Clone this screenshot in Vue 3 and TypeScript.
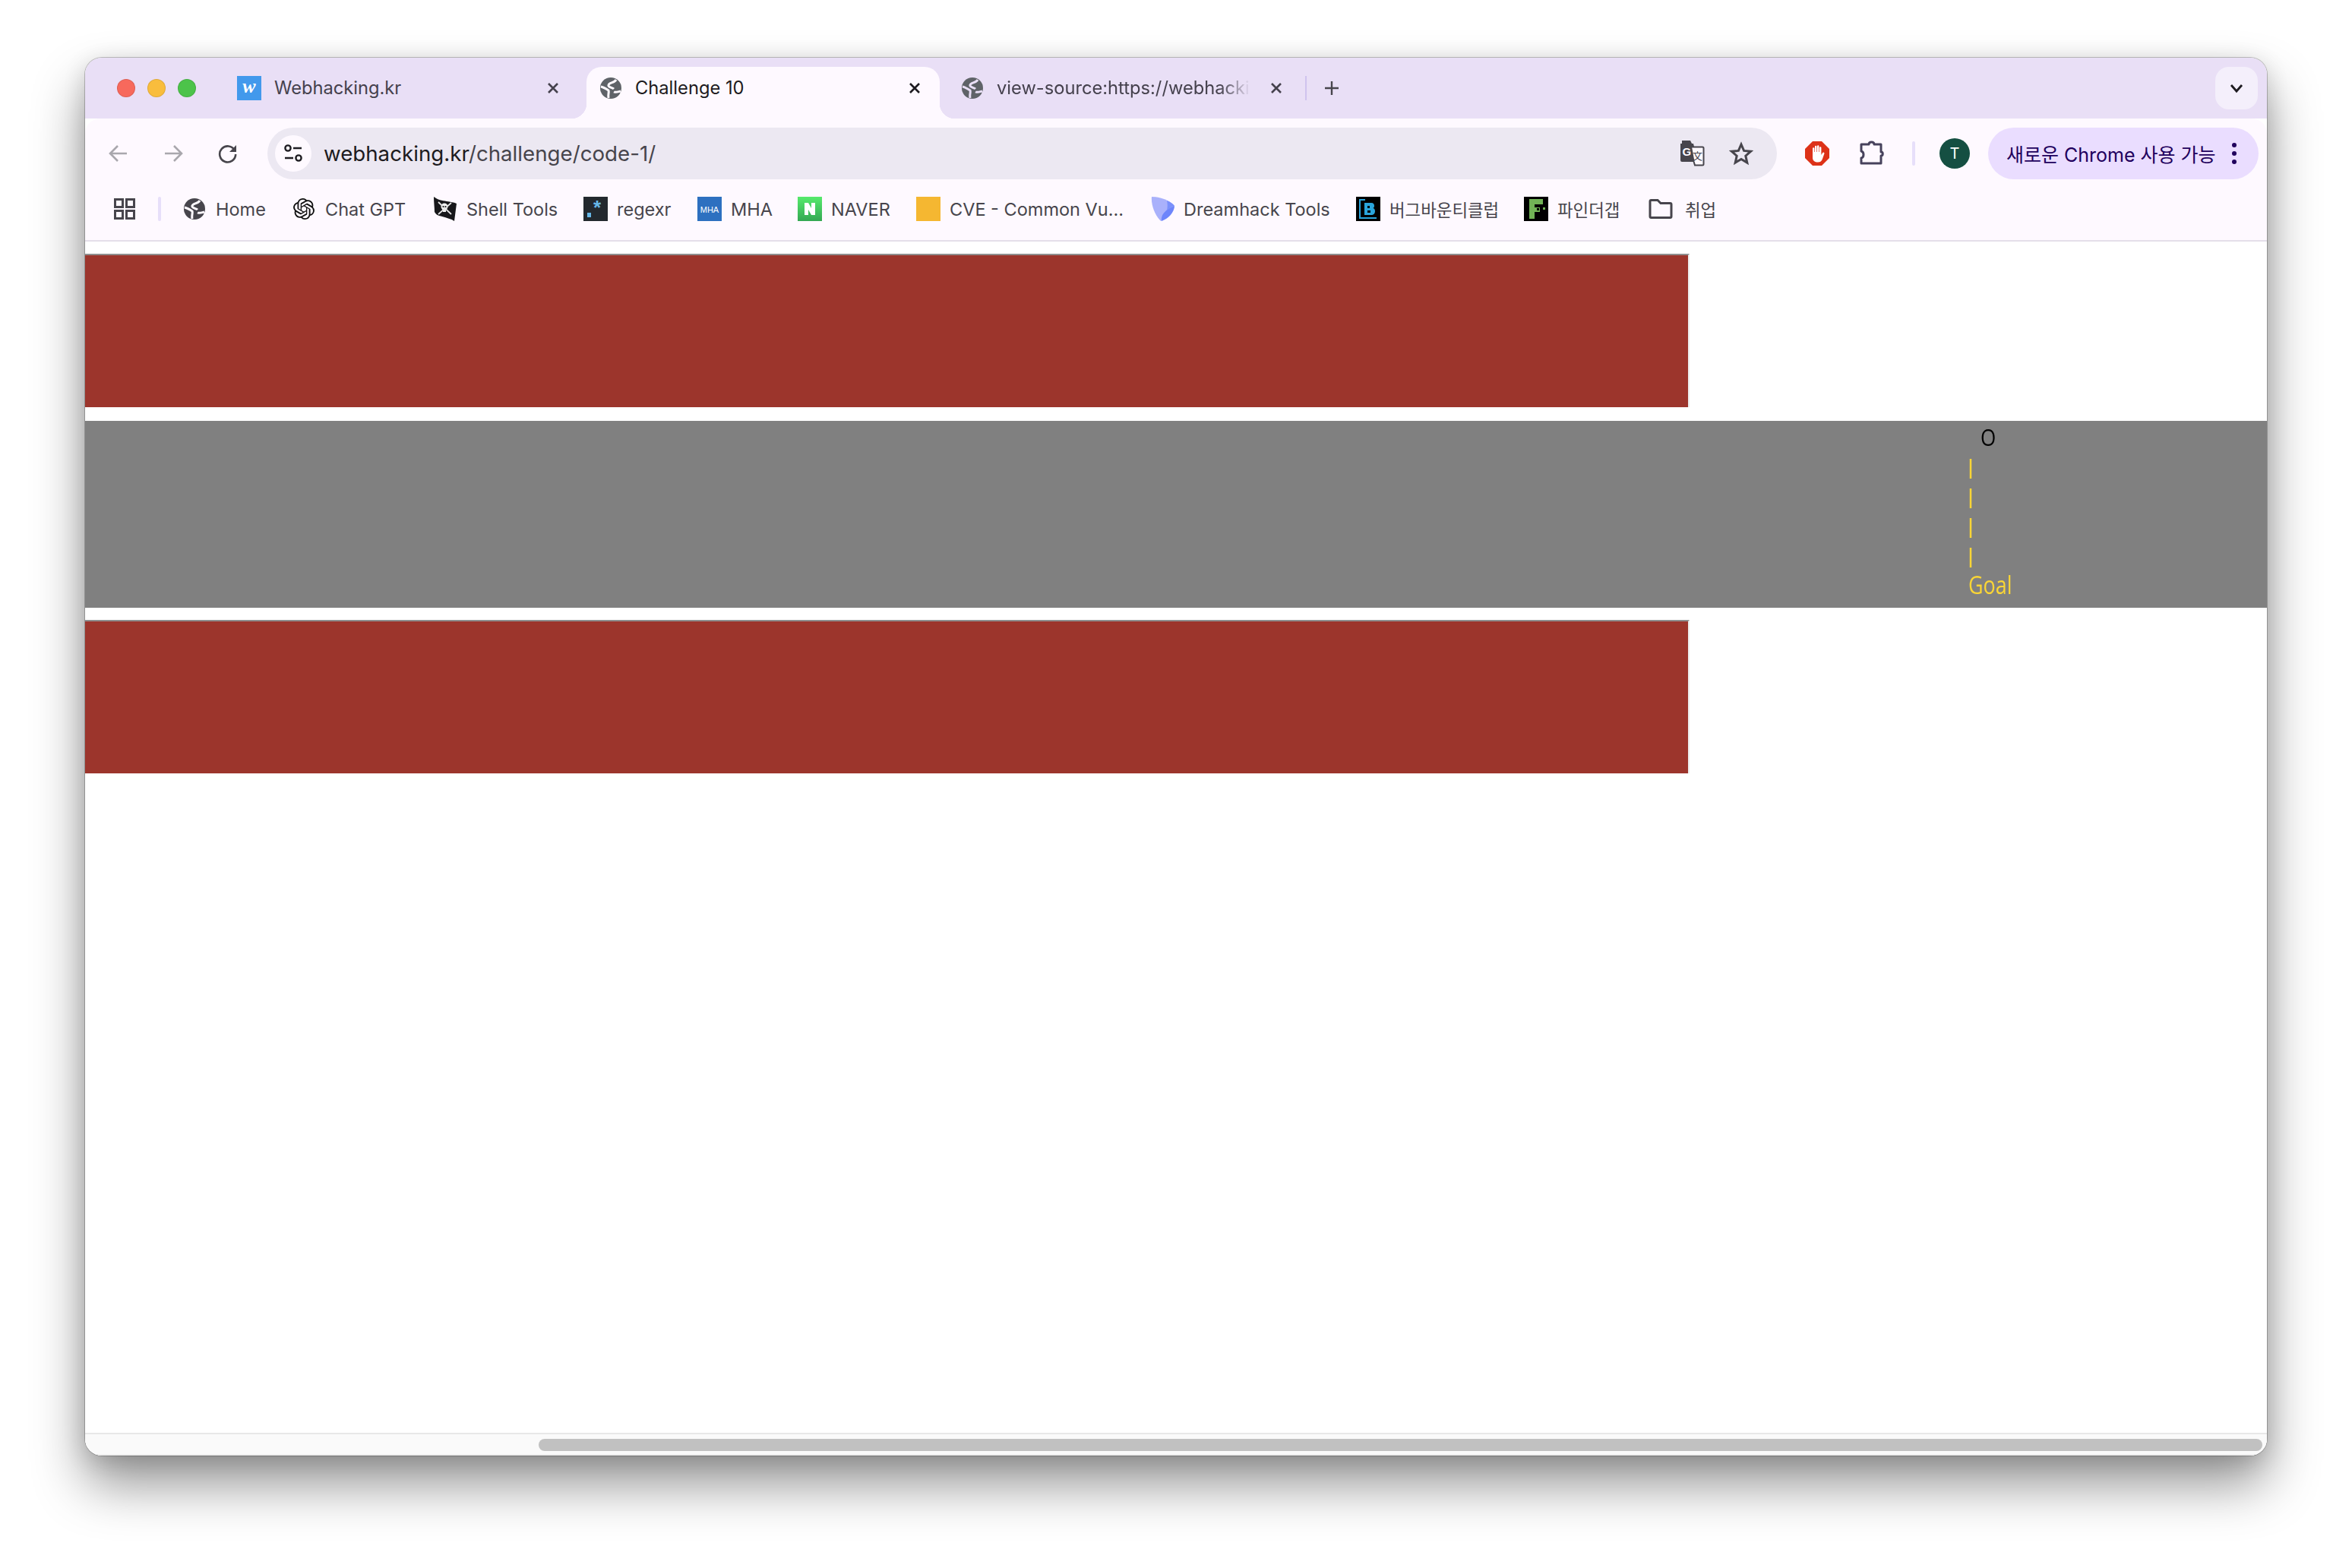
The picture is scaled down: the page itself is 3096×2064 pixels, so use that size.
<template>
  <div class="page">
    <div class="window">
      <div class="tabstrip">
        <div class="lights">
          <span class="light red" />
          <span class="light yellow" />
          <span class="light green" />
        </div>

        <div class="tab tab-first">
          <span class="fav-w">w</span>
          <span class="tab-title">Webhacking.kr</span>
          <svg class="tab-close" viewBox="0 0 24 24"><path d="M6 6l12 12M18 6L6 18" /></svg>
        </div>
        <div class="tab tab-active">
          <svg class="globe" viewBox="0 0 28 28">
            <circle cx="14" cy="14" r="14" fill="#5f6368" />
            <path d="M21 3C18 8 12 6 11 10c-1 3 5 3 7 5M1 12c4 1 7 3 10 5 1 3-1 5 0 10M18 19c2 1 5 0 9-1" fill="none" stroke="#fef9ff" stroke-width="3" />
          </svg>
          <span class="tab-title">Challenge 10</span>
          <svg class="tab-close" viewBox="0 0 24 24"><path d="M6 6l12 12M18 6L6 18" /></svg>
        </div>
        <div class="tab tab-last">
          <svg class="globe" viewBox="0 0 28 28">
            <circle cx="14" cy="14" r="14" fill="#5f6368" />
            <path d="M21 3C18 8 12 6 11 10c-1 3 5 3 7 5M1 12c4 1 7 3 10 5 1 3-1 5 0 10M18 19c2 1 5 0 9-1" fill="none" stroke="#e9dff6" stroke-width="3" />
          </svg>
          <span class="tab-title tab-fade">view-source:https://webhacki</span>
          <svg class="tab-close" viewBox="0 0 24 24"><path d="M6 6l12 12M18 6L6 18" /></svg>
        </div>

        <span class="tab-sep" />
        <svg class="new-tab" viewBox="0 0 24 24"><path d="M12 3v18M3 12h18" /></svg>
        <div class="tab-search">
          <svg viewBox="0 0 20 20" width="20" height="20"><path d="M3 6l7 8 7-8" fill="none" stroke="#1d1b20" stroke-width="2.800" /></svg>
        </div>
      </div>

      <div class="toolbar">
        <svg class="nav-btn dim" viewBox="0 0 26 26"><path d="M24 13H3M12 3L2 13l10 10" /></svg>
        <svg class="nav-btn dim" viewBox="0 0 26 26"><path d="M2 13h21M14 3l10 10-10 10" /></svg>
        <svg class="nav-btn" viewBox="0 0 26 26">
          <path d="M22 9a10.500 10.500 0 1 0 1.200 5" />
          <path class="solid" d="M24 2v9h-9z" />
        </svg>

        <div class="omnibox">
          <span class="site-chip">
            <svg viewBox="0 0 26 26" width="26" height="26" fill="none" stroke="#1f1d23" stroke-width="2.400">
              <circle cx="6" cy="6" r="3.600" />
              <path d="M13 6h11M2 19h11" />
              <circle cx="20" cy="19" r="3.600" />
            </svg>
          </span>
          <span class="url"><b>webhacking.kr</b>/challenge/code-1/</span>
          <span class="omni-icons">
            <svg class="translate" viewBox="0 0 34 34" width="34" height="34">
              <path d="M3 0h11l2 4H3zM1 4h17l6 24H3a2 2 0 0 1-2-2z" fill="#47454c" />
              <path d="M15 8.500h15a1.500 1.500 0 0 1 1.500 1.500v21a1.500 1.500 0 0 1-1.500 1.500H20l-1.500-5z" fill="#fef9ff" stroke="#47454c" stroke-width="2" />
              <text x="3.500" y="20" class="tr-g">G</text>
              <text x="17" y="25" class="tr-k">文</text>
            </svg>
            <svg class="star" viewBox="0 0 32 32" width="32" height="32"><path d="M16 4l3.600 8.400 9 .8-6.800 6 2 8.900L16 23.400l-7.800 4.700 2-8.900-6.800-6 9-.8z" /></svg>
          </span>
        </div>

        <svg class="stop" viewBox="0 0 32 32" width="32" height="32">
          <path d="M10 0h12l10 10v12L22 32H10L0 22V10z" fill="#dd3218" />
          <path d="M10 14V9.500a1.200 1.200 0 0 1 2.400 0V14h.6V7a1.200 1.200 0 0 1 2.400 0v7h.6V6.500a1.200 1.200 0 0 1 2.400 0V14h.6V8.500a1.200 1.200 0 0 1 2.400 0V18l1.800-3a1.300 1.300 0 0 1 2.200 1.300L23 23c-1 3-3 4.500-6 4.500-4 0-7-2-7-6z" fill="#fff" />
        </svg>
        <svg class="puzzle" viewBox="0 0 34 34" width="34" height="34">
          <path d="M3 5h10c0-4 7-4 7 0h9v10c3 0 3 5 0 5v10H3v-7c4-1 4-8 0-9z" />
        </svg>
        <span class="tool-sep" />
        <span class="avatar">T</span>
        <div class="update-pill">
          <span class="update-text">새로운 Chrome 사용 가능</span>
          <span class="kebab"><i /><i /><i /></span>
        </div>
      </div>

      <div class="bookmarks">
        <svg class="apps" viewBox="0 0 28 28" width="28" height="28">
          <path d="M1.500 1.500h10v10h-10zM16.500 1.500h10v10h-10zM1.500 16.500h10v10h-10zM16.500 16.500h10v10h-10z" />
        </svg>
        <span class="bm-sep" />
        <div v-for="b in bookmarks" :key="b.label" class="bm" :style="{ width: b.width + 'px' }">
          <svg v-if="b.icon === 'globe'" class="bm-icon small" viewBox="0 0 28 28">
            <circle cx="14" cy="14" r="14" fill="#47454c" />
            <path d="M21 3C18 8 12 6 11 10c-1 3 5 3 7 5M1 12c4 1 7 3 10 5 1 3-1 5 0 10M18 19c2 1 5 0 9-1" fill="none" stroke="#fef9ff" stroke-width="3" />
          </svg>
          <svg v-else-if="b.icon === 'gpt'" class="bm-icon small" viewBox="0 0 24 24">
            <path fill="#111" d="M22.2819 9.8211a5.9847 5.9847 0 0 0-.5157-4.9108 6.0462 6.0462 0 0 0-6.5098-2.9A6.0651 6.0651 0 0 0 4.9807 4.1818a5.9847 5.9847 0 0 0-3.9977 2.9 6.0462 6.0462 0 0 0 .7427 7.0966 5.98 5.98 0 0 0 .511 4.9107 6.051 6.051 0 0 0 6.5146 2.9001A5.9847 5.9847 0 0 0 13.2599 24a6.0557 6.0557 0 0 0 5.7718-4.2058 5.9894 5.9894 0 0 0 3.9977-2.9001 6.0557 6.0557 0 0 0-.7475-7.0729zm-9.022 12.6081a4.4755 4.4755 0 0 1-2.8764-1.0408l.1419-.0804 4.7783-2.7582a.7948.7948 0 0 0 .3927-.6813v-6.7369l2.02 1.1686a.071.071 0 0 1 .038.052v5.5826a4.504 4.504 0 0 1-4.4945 4.4944zm-9.6607-4.1254a4.4708 4.4708 0 0 1-.5346-3.0137l.142.0852 4.783 2.7582a.7712.7712 0 0 0 .7806 0l5.8428-3.3685v2.3324a.0804.0804 0 0 1-.0332.0615L9.74 19.9502a4.4992 4.4992 0 0 1-6.1408-1.6464zM2.3408 7.8956a4.485 4.485 0 0 1 2.3655-1.9728V11.6a.7664.7664 0 0 0 .3879.6765l5.8144 3.3543-2.0201 1.1685a.0757.0757 0 0 1-.071 0l-4.8303-2.7865A4.504 4.504 0 0 1 2.3408 7.872zm16.5963 3.8558L13.1038 8.364 15.1192 7.2a.0757.0757 0 0 1 .071 0l4.8303 2.7913a4.4944 4.4944 0 0 1-.6765 8.1042v-5.6772a.79.79 0 0 0-.407-.667zm2.0107-3.0231l-.142-.0852-4.7735-2.7818a.7759.7759 0 0 0-.7854 0L9.409 9.2297V6.8974a.0662.0662 0 0 1 .0284-.0615l4.8303-2.7866a4.4992 4.4992 0 0 1 6.6802 4.66zM8.3065 12.863l-2.02-1.1638a.0804.0804 0 0 1-.038-.0567V6.0742a4.4992 4.4992 0 0 1 7.3757-3.4537l-.142.0805L8.704 5.459a.7948.7948 0 0 0-.3927.6813zm1.0976-2.3654l2.602-1.4998 2.6069 1.4998v2.9994l-2.5974 1.4997-2.6067-1.4997Z" />
          </svg>
          <svg v-else-if="b.icon === 'flag'" class="bm-icon" viewBox="0 0 32 32">
            <path d="M1 0c5 4 11 5 17 6 5 1 9 1 13 3l-3 23C24 29 18 28 12 26 8 25 4 24 2 20 2 14 1 7 1 0z" fill="#17171a" />
            <circle cx="15" cy="13" r="4.500" fill="#f1f1f1" />
            <rect x="13" y="16" width="4" height="4" fill="#f1f1f1" />
            <path d="M7 7l17 16M24 8L7 23" stroke="#e4e4e4" stroke-width="1.800" />
            <circle cx="13.500" cy="13" r="1.100" fill="#17171a" />
            <circle cx="16.500" cy="13" r="1.100" fill="#17171a" />
          </svg>
          <svg v-else-if="b.icon === 'regexr'" class="bm-icon" viewBox="0 0 32 32">
            <rect width="32" height="32" fill="#23292e" />
            <rect x="5" y="21" width="5" height="6" fill="#67b8e8" />
            <text x="13" y="23" class="fav-star">*</text>
          </svg>
          <svg v-else-if="b.icon === 'mha'" class="bm-icon" viewBox="0 0 32 32">
            <rect width="32" height="32" fill="#2d70c0" />
            <text x="16" y="21" class="fav-mha">MHA</text>
          </svg>
          <svg v-else-if="b.icon === 'naver'" class="bm-icon" viewBox="0 0 32 32">
            <defs>
              <linearGradient id="naver-g" x1="0" y1="0" x2="0" y2="1">
                <stop offset="0" stop-color="#56ea6c" />
                <stop offset="1" stop-color="#34a853" />
              </linearGradient>
            </defs>
            <rect width="32" height="32" fill="url(#naver-g)" />
            <path d="M9 8h5l4 7V8h5v16h-5l-4-7v7H9z" fill="#fff" />
          </svg>
          <span v-else-if="b.icon === 'cve'" class="bm-icon cve-box" />
          <svg v-else-if="b.icon === 'dream'" class="bm-icon" viewBox="0 0 32 32">
            <path d="M2 0c12 0 24 5 30 12-2 8-10 16-18 20C7 25 1 12 2 0z" fill="#a9b1fb" />
            <path d="M15 32c-1-6 2-14 17-20 0 8-8 17-17 20z" fill="#6d85fb" />
            <path d="M22 5c5 2 8 4 10 7-4 1-7 3-10 6 1-4 1-9 0-13z" fill="#7a90fb" />
          </svg>
          <svg v-else-if="b.icon === 'bug'" class="bm-icon" viewBox="0 0 32 32">
            <rect width="32" height="32" fill="#000" />
            <path d="M12 4H5v24h22" fill="none" stroke="#2aa5dc" stroke-width="2" />
            <path d="M11 8h9c3 0 4 2 4 4 0 2-1 3-2 3 2 0 3 2 3 4 0 3-2 5-5 5h-9zM15 12v3h3v-3zM15 18v3h4v-3z" fill="#2aa5dc" fill-rule="evenodd" />
          </svg>
          <svg v-else-if="b.icon === 'finder'" class="bm-icon" viewBox="0 0 32 32">
            <rect width="32" height="32" fill="#000" />
            <path d="M7 3h18v7H14v4h7v6h-7v9H7z" fill="#71b356" />
            <rect x="17" y="15" width="3" height="3" fill="#000" />
            <rect x="25" y="14" width="3" height="3" fill="#71b356" />
          </svg>
          <svg v-else-if="b.icon === 'folder'" class="bm-icon folder" viewBox="0 0 32 26">
            <path d="M2 3a1.500 1.500 0 0 1 1.500-1.500H12l4 4h12.500A1.500 1.500 0 0 1 30 7v16a1.500 1.500 0 0 1-1.500 1.500h-25A1.500 1.500 0 0 1 2 23z" />
          </svg>
          <span class="bm-label" :class="{ cjk: b.cjk }">{{ b.label }}</span>
        </div>
      </div>

      <div class="content">
        <div class="main">
          <div class="wall" />
          <div class="road">
            <div class="marks">
              <div class="ball">O</div>
              <div class="track">|</div>
              <div class="track">|</div>
              <div class="track">|</div>
              <div class="track">|</div>
              <div class="goal">Goal</div>
            </div>
          </div>
          <div class="wall wall-low" />
        </div>
        <div class="hscroll">
          <div class="thumb" />
        </div>
      </div>
    </div>
  </div>
</template>

<script setup lang="ts">
interface Bookmark {
  label: string
  icon: string
  width: number
  cjk?: boolean
}

// widths keep each favicon where the bar puts it, whatever the label measures
const bookmarks: Bookmark[] = [
  { label: 'Home', icon: 'globe', width: 144 },
  { label: 'Chat GPT', icon: 'gpt', width: 184 },
  { label: 'Shell Tools', icon: 'flag', width: 198 },
  { label: 'regexr', icon: 'regexr', width: 150 },
  { label: 'MHA', icon: 'mha', width: 132 },
  { label: 'NAVER', icon: 'naver', width: 156 },
  { label: 'CVE - Common Vu...', icon: 'cve', width: 308 },
  { label: 'Dreamhack Tools', icon: 'dream', width: 271 },
  { label: '버그바운티클럽', icon: 'bug', width: 221, cjk: true },
  { label: '파인더갭', icon: 'finder', width: 164, cjk: true },
  { label: '취업', icon: 'folder', width: 100, cjk: true },
]
</script>

<style>
html,
body {
  margin: 0;
  background: #fff;
}
</style>

<style scoped>
.page {
  width: 3096px;
  height: 2064px;
  box-sizing: border-box;
  padding: 76px 112px 0;
  overflow: hidden;
  font-family: Inter, "Noto Sans CJK KR", sans-serif;
}

.window {
  width: 2872px;
  height: 1840px;
  display: flex;
  flex-direction: column;
  border-radius: 22px;
  overflow: hidden;
  background: #fff;
  box-shadow: 0 0 0 1px rgba(0, 0, 0, 0.22), 0 38px 68px rgba(0, 0, 0, 0.42), 0 6px 30px rgba(0, 0, 0, 0.14);
}

.tabstrip {
  height: 80px;
  flex: none;
  display: flex;
  align-items: flex-end;
  box-sizing: border-box;
  padding-left: 42px;
  background: #e9dff6;
}

.lights {
  width: 138px;
  height: 68px;
  display: flex;
  align-items: center;
  gap: 16px;
  flex: none;
  padding-bottom: 12px;
  box-sizing: border-box;
}

.light {
  width: 24px;
  height: 24px;
  border-radius: 50%;
  box-sizing: border-box;
  border: 1px solid rgba(0, 0, 0, 0.1);
}

.red { background: #f7695c; }
.yellow { background: #f9bd3d; }
.green { background: #4cc34a; }

.tab {
  height: 68px;
  flex: none;
  display: flex;
  align-items: flex-start;
  box-sizing: border-box;
  padding-top: 12px;
  color: #45414d;
  font-size: 23.700px;
  position: relative;
}

.tab-first {
  width: 480px;
  padding-left: 20px;
  padding-right: 32px;
}

.tab-active {
  width: 465px;
  padding-left: 18px;
  padding-right: 21px;
  background: #fef9ff;
  border-radius: 20px 20px 0 0;
  color: #1d1b20;
}

.tab-active::before,
.tab-active::after {
  content: "";
  position: absolute;
  bottom: 0;
  width: 20px;
  height: 20px;
}

.tab-active::before {
  left: -20px;
  background: radial-gradient(circle at 0 0, #e9dff6 20px, #fef9ff 20.500px);
}

.tab-active::after {
  right: -20px;
  background: radial-gradient(circle at 100% 0, #e9dff6 20px, #fef9ff 20.500px);
}

.tab-last {
  width: 475px;
  padding-left: 29px;
  padding-right: 20px;
}

.fav-w {
  width: 32px;
  height: 32px;
  flex: none;
  background: #4299ec;
  color: #fff;
  font: italic bold 26px/28px "Liberation Serif", serif;
  text-align: center;
}

.globe {
  width: 28px;
  height: 28px;
  flex: none;
  margin-top: 2px;
}

.tab-title {
  flex: 1;
  min-width: 0;
  margin-left: 18px;
  line-height: 32px;
  white-space: nowrap;
}

.tab-first .tab-title {
  margin-left: 17px;
}

.tab-fade {
  -webkit-mask-image: linear-gradient(to right, #000 88%, transparent 100%);
  mask-image: linear-gradient(to right, #000 88%, transparent 100%);
  margin-right: 22px;
}

.tab-close {
  width: 24px;
  height: 24px;
  flex: none;
  margin-top: 4px;
  fill: none;
  stroke: currentColor;
  stroke-width: 2.600;
}

.tab-sep {
  width: 2px;
  height: 32px;
  flex: none;
  align-self: flex-start;
  margin: 24px 0 0 6px;
  background: #cfc3ee;
}

.new-tab {
  width: 24px;
  height: 24px;
  flex: none;
  align-self: flex-start;
  margin: 28px 0 0 21px;
  fill: none;
  stroke: #47454c;
  stroke-width: 2.400;
}

.tab-search {
  width: 56px;
  height: 56px;
  flex: none;
  align-self: flex-start;
  margin: 12px 12px 0 auto;
  display: flex;
  align-items: center;
  justify-content: center;
  border-radius: 18px;
  background: #f4effb;
}

.toolbar {
  height: 80px;
  flex: none;
  display: flex;
  align-items: center;
  box-sizing: border-box;
  padding: 12px 12px 0 31px;
  background: #fef9ff;
  border-radius: 20px 20px 0 0;
}

.nav-btn {
  width: 26px;
  height: 26px;
  flex: none;
  margin-right: 46px;
  fill: none;
  stroke: #47454c;
  stroke-width: 2.600;
}

.nav-btn.dim {
  stroke: #a9a7ad;
}

.nav-btn .solid {
  fill: #47454c;
  stroke: none;
}

.omnibox {
  width: 1987px;
  height: 68px;
  flex: none;
  margin-left: -7px;
  display: flex;
  align-items: center;
  box-sizing: border-box;
  padding-left: 10px;
  border-radius: 34px;
  background: #ece8f2;
}

.site-chip {
  width: 48px;
  height: 48px;
  flex: none;
  display: flex;
  align-items: center;
  justify-content: center;
  border-radius: 50%;
  background: #fef9ff;
}

.url {
  margin-left: 16px;
  font-size: 27.700px;
  color: #47454c;
  white-space: nowrap;
}

.url b {
  font-weight: 400;
  color: #1d1b20;
}

.omni-icons {
  margin-left: auto;
  display: flex;
  align-items: center;
  gap: 31px;
  padding-right: 31px;
}

.tr-g {
  font: bold 15px "Liberation Sans", sans-serif;
  fill: #fef9ff;
}

.tr-k {
  font: 13px "Noto Sans CJK KR", sans-serif;
  fill: #47454c;
}

.star {
  fill: none;
  stroke: #47454c;
  stroke-width: 3;
}

.stop {
  flex: none;
  margin-left: 37px;
}

.puzzle {
  flex: none;
  margin-left: 39px;
  fill: none;
  stroke: #47425c;
  stroke-width: 3;
  stroke-linejoin: round;
}

.tool-sep {
  width: 4px;
  height: 32px;
  flex: none;
  margin-left: 36px;
  border-radius: 2px;
  background: #e7dffa;
}

.avatar {
  width: 40px;
  height: 40px;
  flex: none;
  margin-left: 32px;
  border-radius: 50%;
  background: #154f42;
  color: #fff;
  font-size: 20px;
  line-height: 40px;
  text-align: center;
}

.update-pill {
  width: 356px;
  height: 68px;
  flex: none;
  margin-left: 24px;
  display: flex;
  align-items: center;
  box-sizing: border-box;
  padding-left: 24px;
  border-radius: 34px;
  background: #eaddff;
  color: #21005d;
}

.update-text {
  font-size: 25px;
  white-space: nowrap;
}

.kebab {
  margin-left: 21px;
  display: flex;
  flex-direction: column;
  gap: 5px;
}

.kebab i {
  width: 6px;
  height: 6px;
  border-radius: 50%;
  background: #21005d;
}

.bookmarks {
  height: 82px;
  flex: none;
  display: flex;
  align-items: center;
  box-sizing: border-box;
  padding: 0 0 2px 38px;
  background: #fef9ff;
  border-bottom: 2px solid #e4dfe9;
}

.apps {
  flex: none;
  fill: none;
  stroke: #47454c;
  stroke-width: 3;
}

.bm-sep {
  width: 4px;
  height: 32px;
  flex: none;
  margin: 0 30px 0 30px;
  border-radius: 2px;
  background: #e7dffa;
}

.bm {
  display: flex;
  align-items: center;
  flex: none;
  color: #47454c;
  font-size: 23.500px;
}

.bm-icon {
  width: 32px;
  height: 32px;
  flex: none;
  margin-right: 12px;
}

.bm-icon.small {
  width: 28px;
  height: 28px;
  margin-right: 14px;
}

.cve-box {
  background: #f5b731;
}

.folder {
  height: 26px;
  margin-right: 16px;
  fill: none;
  stroke: #47454c;
  stroke-width: 3;
}

.fav-star {
  font: bold 26px "Liberation Sans", sans-serif;
  fill: #67b8e8;
}

.fav-mha {
  font: 11px "Liberation Sans", sans-serif;
  fill: #fff;
  text-anchor: middle;
}

.bm-label {
  white-space: nowrap;
}

.bm-label.cjk {
  font-size: 22.400px;
}

.content {
  flex: 1;
  min-height: 0;
  display: flex;
  flex-direction: column;
  background: #fff;
}

.main {
  flex: 1;
  min-height: 0;
  overflow: hidden;
  box-sizing: border-box;
  padding-top: 16px;
}

.wall {
  width: 2112px;
  height: 202px;
  box-sizing: border-box;
  border-top: 2px solid #8e8e8e;
  border-right: 2px solid #ececec;
  background: #9c352c;
}

.wall-low {
  margin-top: 16px;
}

.road {
  height: 246px;
  margin-top: 18px;
  background: #808080;
  overflow: hidden;
}

.marks {
  margin-left: 2479px;
  font-family: "Open Sans", sans-serif;
  color: #fad535;
  transform: scaleX(0.84);
  transform-origin: left top;
}

.ball {
  margin: 1px 0 0 19px;
  color: #000;
  font-size: 31px;
  line-height: 40px;
}

.track {
  height: 39px;
  margin-left: -4px;
  font-size: 27px;
  font-weight: 700;
  line-height: 38px;
}

.goal {
  font-size: 32px;
  line-height: 38px;
}

.hscroll {
  height: 30px;
  flex: none;
  box-sizing: border-box;
  padding: 6px 6px 6px 597px;
  background: #fafafa;
  border-top: 2px solid #e8e8e8;
  border-bottom: 2px solid #efefef;
}

.thumb {
  height: 16px;
  border-radius: 8px;
  background: #c1c1c1;
}
</style>
